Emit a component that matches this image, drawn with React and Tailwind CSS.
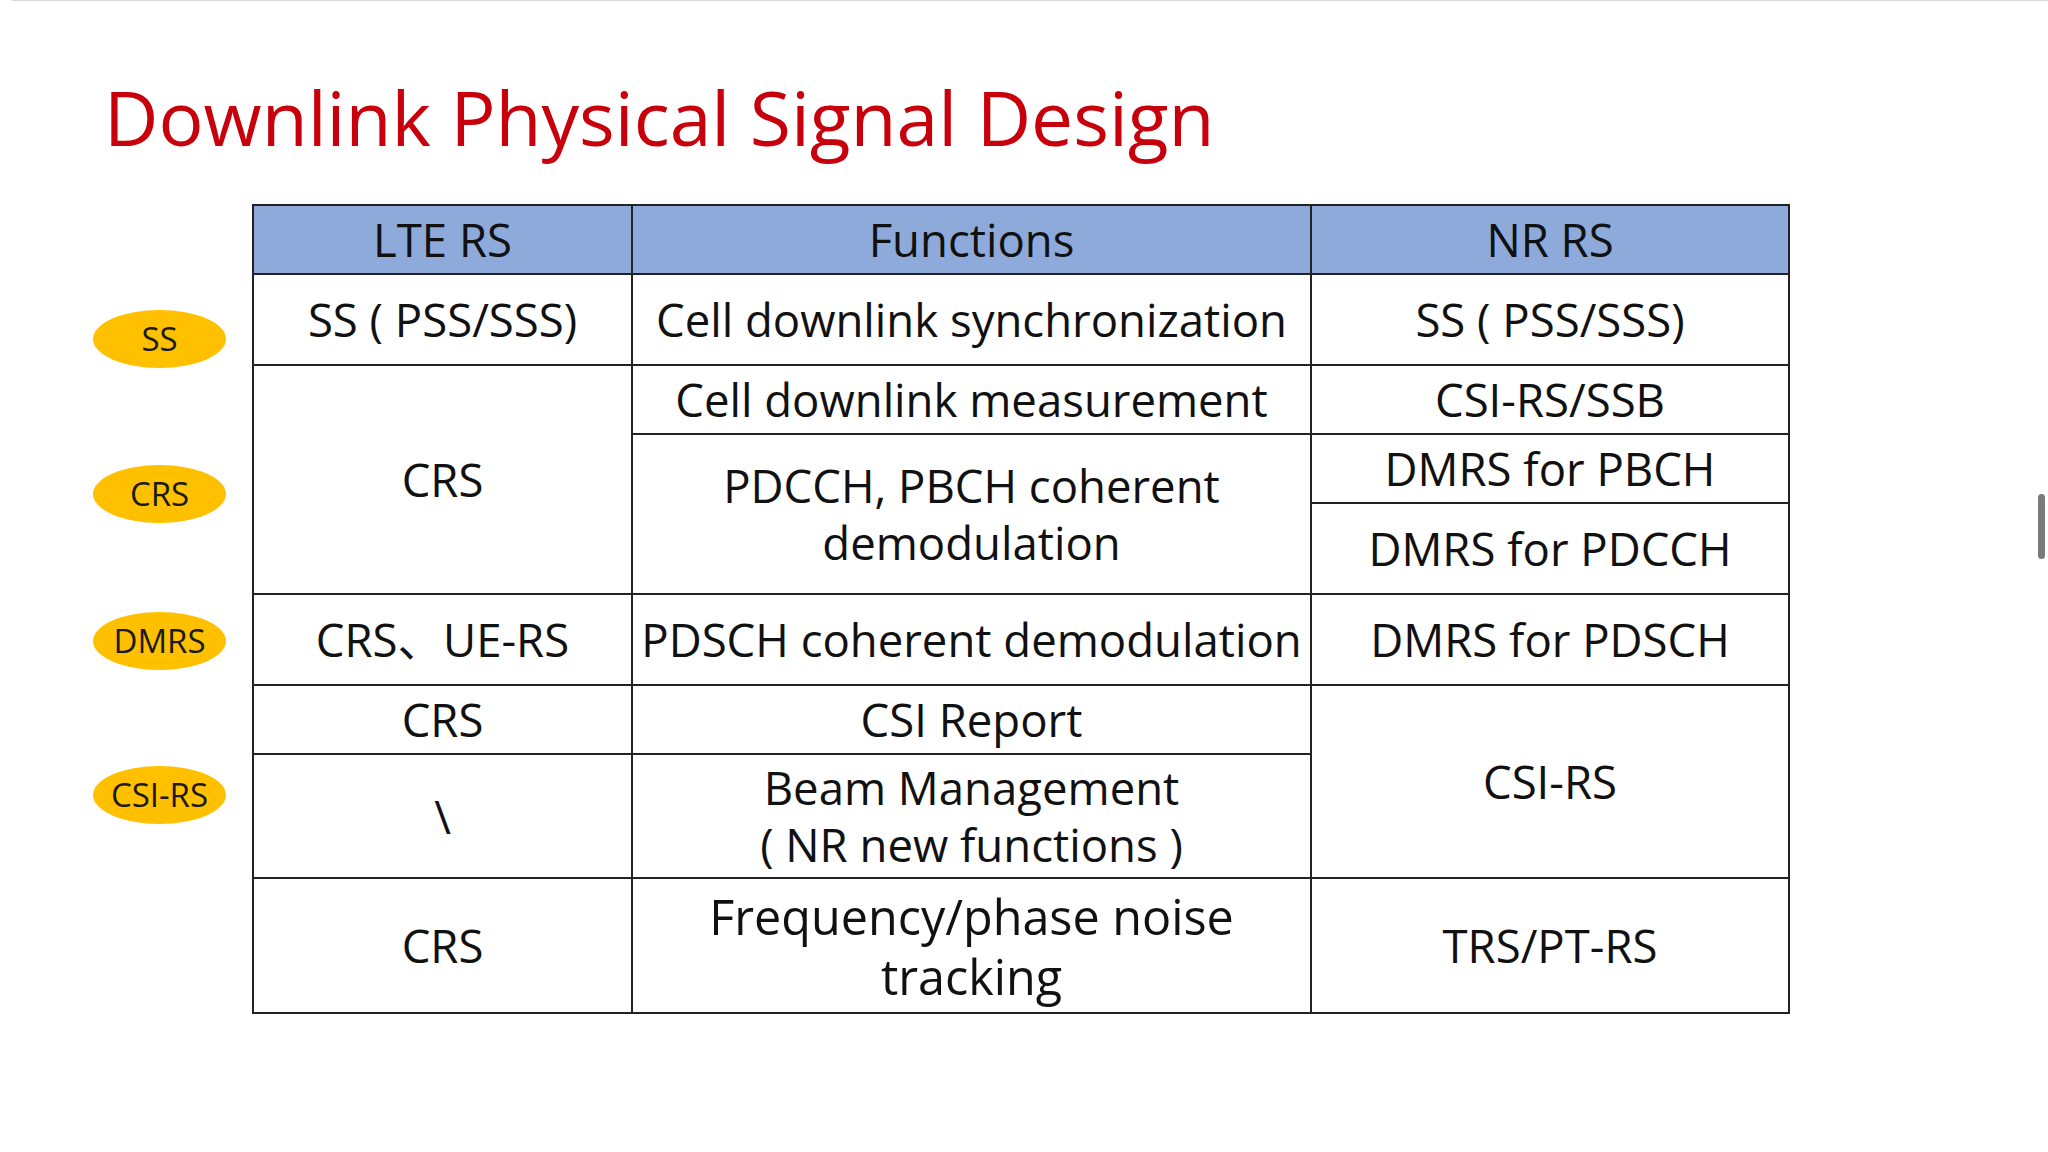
import React from 'react';

const font = { fontFamily: '"Open Sans", "Noto Sans CJK SC", sans-serif' };

const Cell = ({ className = '', children }) => (
	<div className={'bg-white flex items-center justify-center text-center text-[45.5px] leading-[57px] text-[#111] ' + className}>
		{children}
	</div>
);

const Tag = ({ label, className = '' }) => (
	<div className={'w-[133px] h-[58px] rounded-[50%] bg-[#ffc000] flex items-center justify-center text-[33px] text-[#1a1a1a] ' + className}>
		{label}
	</div>
);

export default function App() {
	return (
		<div className="relative w-[2048px] h-[1152px] bg-white overflow-hidden" style={font}>
			<div className="ml-[12px] h-px bg-[#d9d9d9]" />

			<h1 className="pl-[104px] pt-[79px] text-[75px] leading-none text-[#c7000b]">
				Downlink Physical Signal Design
			</h1>

			<div className="flex pl-[93px] mt-[49px]">
				<div className="w-[134px] flex flex-col">
					<Tag label="SS" className="mt-[106px]" />
					<Tag label="CRS" className="mt-[97px]" />
					<Tag label="DMRS" className="mt-[89px]" />
					<Tag label="CSI-RS" className="mt-[96px]" />
				</div>

				<div className="ml-[25px] grid grid-cols-[377px_677px_476px] grid-rows-[67px_89px_67px_67px_89px_89px_67px_122px_133px] gap-[2px] p-[2px] bg-[#222]">
					{/* header */}
					<Cell className="bg-[#8eaadb]!">LTE RS</Cell>
					<Cell className="bg-[#8eaadb]!">Functions</Cell>
					<Cell className="bg-[#8eaadb]!">NR RS</Cell>

					{/* SS */}
					<Cell>SS ( PSS/SSS)</Cell>
					<Cell>Cell downlink synchronization</Cell>
					<Cell>SS ( PSS/SSS)</Cell>

					{/* CRS block */}
					<Cell className="row-span-3">CRS</Cell>
					<Cell>Cell downlink measurement</Cell>
					<Cell>CSI-RS/SSB</Cell>
					<Cell className="row-span-2">PDCCH, PBCH coherent<br />demodulation</Cell>
					<Cell>DMRS for PBCH</Cell>
					<Cell>DMRS for PDCCH</Cell>

					{/* DMRS */}
					<Cell>CRS、UE-RS</Cell>
					<Cell>PDSCH coherent demodulation</Cell>
					<Cell>DMRS for PDSCH</Cell>

					{/* CSI-RS */}
					<Cell>CRS</Cell>
					<Cell>CSI Report</Cell>
					<Cell className="row-span-2">CSI-RS</Cell>
					<Cell>\</Cell>
					<Cell>Beam Management<br />( NR new functions )</Cell>

					{/* tracking */}
					<Cell>CRS</Cell>
					<Cell className="text-[48.5px]! leading-[60px]!">Frequency/phase noise<br />tracking</Cell>
					<Cell>TRS/PT-RS</Cell>
				</div>
			</div>

			<div className="absolute left-[2038px] top-[494px] w-[7px] h-[65px] rounded-full bg-[#7a7a7a]" />
		</div>
	);
}
